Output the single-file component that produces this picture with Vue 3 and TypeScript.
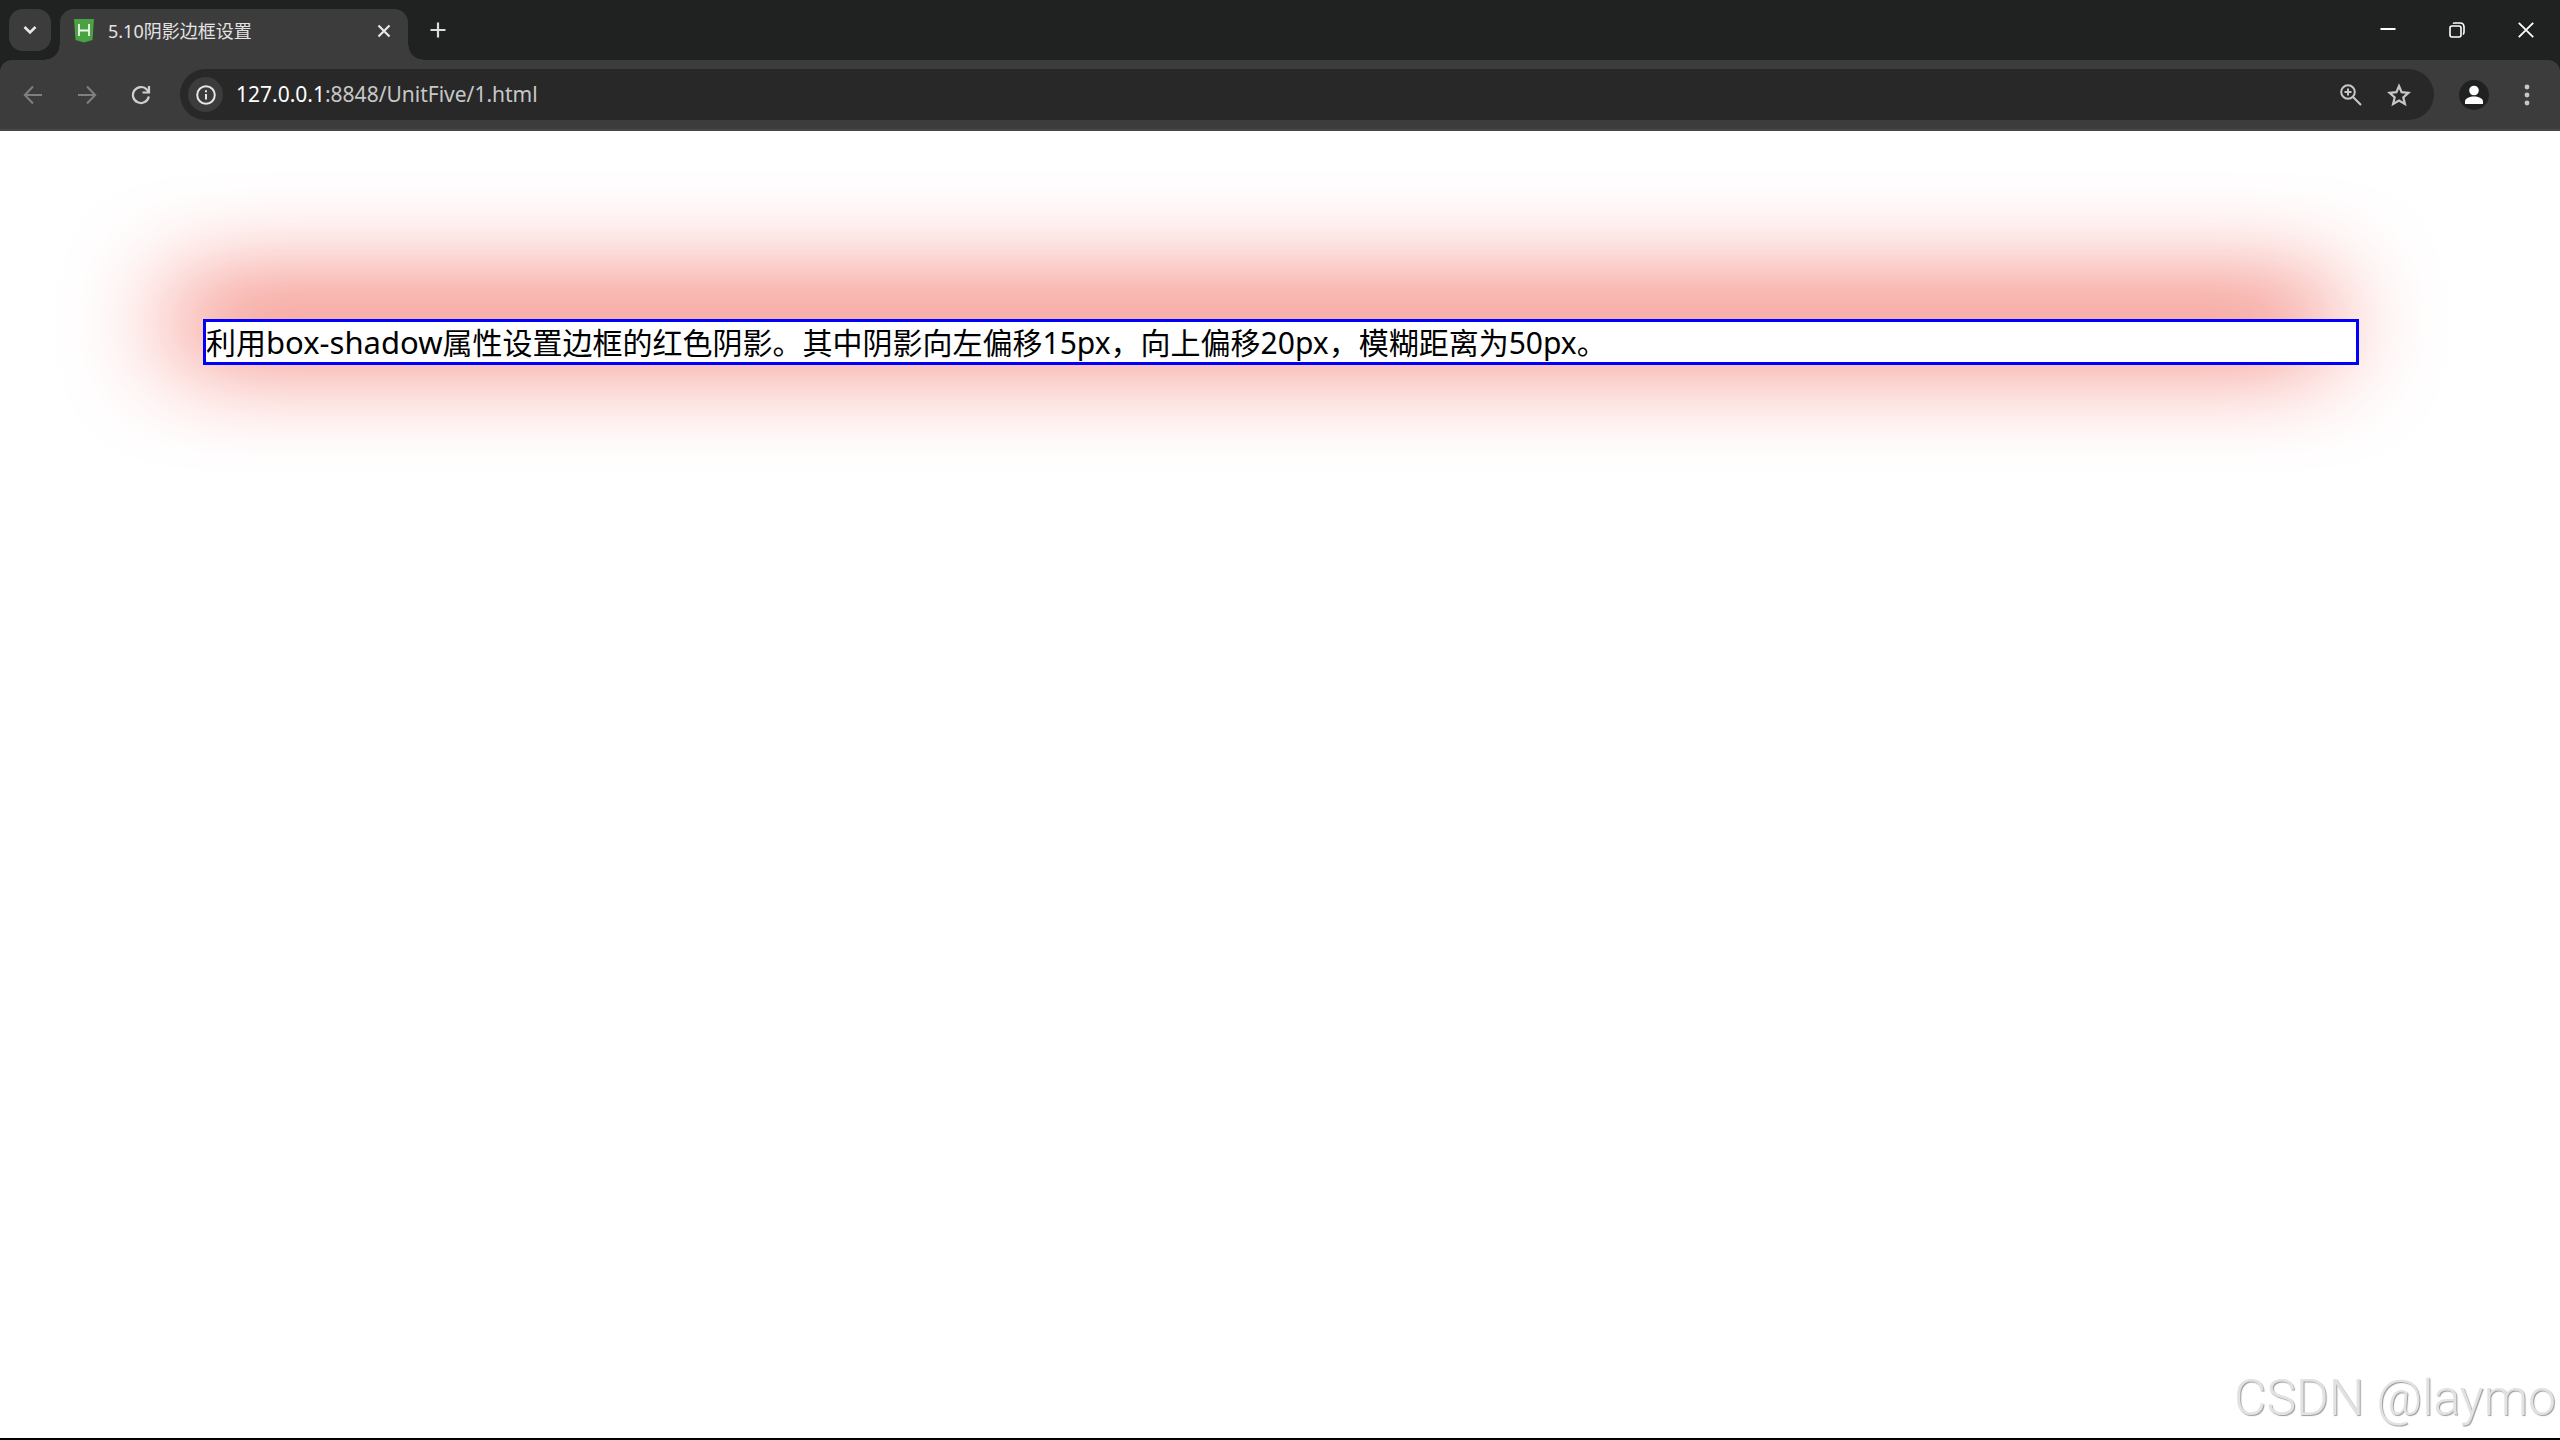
<script setup lang="ts">
import { ref } from 'vue'

const tabTitle = '5.10阴影边框设置'
const host = '127.0.0.1'
const path = ':8848/UnitFive/1.html'
const address = ref(host + path)
</script>

<template>
  <div class="browser">
    <header class="tab-strip">
      <button class="tab-search" type="button" aria-label="Search tabs">
        <svg width="14" height="10" viewBox="0 0 14 10"><path d="M1.5 2 7 7.5 12.500 2" fill="none" stroke="#e8e8e8" stroke-width="2.600" /></svg>
      </button>
      <div class="tab">
        <svg class="favicon" width="20" height="24" viewBox="0 0 20 24">
          <path d="M0 0h20l-1.500 21L10 23.500 1.500 21Z" fill="#4aa342" />
          <path d="M5 5v12M15 5v12M5 11.500h10" fill="none" stroke="#eef7ec" stroke-width="1.800" />
        </svg>
        <span class="tab-title">{{ tabTitle }}</span>
        <button class="tab-close" type="button" aria-label="Close tab">
          <svg width="14" height="14" viewBox="0 0 14 14"><path d="M1.500 1.500l11 11M12.500 1.500l-11 11" stroke="#e8e8e8" stroke-width="2.200" /></svg>
        </button>
      </div>
      <button class="new-tab" type="button" aria-label="New tab">
        <svg width="16" height="16" viewBox="0 0 16 16"><path d="M8 .500v15M.500 8h15" stroke="#dcdcdc" stroke-width="2.200" /></svg>
      </button>
      <div class="window-controls">
        <button type="button" aria-label="Minimize">
          <svg width="16" height="16" viewBox="0 0 16 16"><path d="M.500 7h15" stroke="#fff" stroke-width="2" /></svg>
        </button>
        <button type="button" aria-label="Restore">
          <svg width="16" height="16" viewBox="0 0 16 16" fill="none" stroke="#fff" stroke-width="1.600">
            <rect x="1" y="4" width="11" height="11" rx="2" />
            <path d="M4 1.500Q4.500 1 6 1h5q4 0 4 4v5q0 1.500-1 2.500" />
          </svg>
        </button>
        <button type="button" aria-label="Close window">
          <svg width="16" height="16" viewBox="0 0 16 16"><path d="M.800.800l14.400 14.400M15.200.800.800 15.200" stroke="#fff" stroke-width="1.800" /></svg>
        </button>
      </div>
    </header>

    <nav class="toolbar">
      <button class="nav-button" type="button" aria-label="Back">
        <svg width="20" height="20" viewBox="0 0 20 20" fill="none" stroke="#7f7f7f" stroke-width="2"><path d="M19 10H2M10 1.500 1.800 10 10 18.500" /></svg>
      </button>
      <button class="nav-button" type="button" aria-label="Forward">
        <svg width="20" height="20" viewBox="0 0 20 20" fill="none" stroke="#7f7f7f" stroke-width="2"><path d="M1 10h17M10 1.500l8.200 8.500-8.200 8.500" /></svg>
      </button>
      <button class="nav-button" type="button" aria-label="Reload">
        <svg width="20" height="20" viewBox="0 0 20 20" fill="none" stroke="#cfcfcf" stroke-width="2.200">
          <path d="M17.800 11.500A8 8 0 1 1 16 4.800L17.500 6.500" />
          <path d="M18 1v6.500h-6.500" />
        </svg>
      </button>
      <div class="omnibox">
        <button class="site-info" type="button" aria-label="Site information">
          <svg width="20" height="20" viewBox="0 0 20 20" fill="none" stroke="#e6e6e6" stroke-width="2">
            <circle cx="10" cy="10" r="8.800" />
            <path d="M10 9v5.500M10 5.200v2" />
          </svg>
        </button>
        <label class="address">
          <span class="address-text" aria-hidden="true"><b>{{ host }}</b>{{ path }}</span>
          <input v-model="address" type="text" aria-label="Address" />
        </label>
        <button class="omni-action" type="button" aria-label="Zoom">
          <svg width="22" height="22" viewBox="0 0 22 22" fill="none" stroke="#c7c7c7" stroke-width="2">
            <circle cx="8" cy="8" r="6.800" />
            <path d="M13 13l8 8M8 4.500v7M4.500 8h7" />
          </svg>
        </button>
        <button class="omni-action" type="button" aria-label="Bookmark this page">
          <svg width="24" height="24" viewBox="0 0 24 24" fill="none" stroke="#c7c7c7" stroke-width="2.200">
            <path d="M12 3l2.600 6.200 6.900.600-5.200 4.500 1.600 6.700L12 17.500 6.100 21l1.600-6.700-5.200-4.500 6.900-.600Z" />
          </svg>
        </button>
      </div>
      <button class="profile" type="button" aria-label="Profile">
        <svg width="30" height="30" viewBox="0 0 30 30">
          <circle cx="15" cy="15" r="15" fill="#202221" />
          <circle cx="15" cy="10.500" r="4.800" fill="#fff" />
          <path d="M6 24v-2.500C6 18 11 16.500 15 16.500s9 1.500 9 5V24Z" fill="#fff" />
        </svg>
      </button>
      <button class="menu" type="button" aria-label="Menu">
        <svg width="6" height="22" viewBox="0 0 6 22" fill="#c7c7c7"><circle cx="3" cy="3" r="2.400" /><circle cx="3" cy="11" r="2.400" /><circle cx="3" cy="19" r="2.400" /></svg>
      </button>
    </nav>

    <main class="page">
      <p class="shadow-box">利用<span class="property">box-shadow</span>属性设置边框的红色阴影。其中阴影向左偏移15px，向上偏移20px，模糊距离为50px。</p>
      <span class="watermark">CSDN @laymo</span>
    </main>
  </div>
</template>

<style>
body {
  margin: 0;
}
</style>

<style scoped>
.browser {
  display: flex;
  flex-direction: column;
  min-height: 100vh;
  box-sizing: border-box;
  border-bottom: 2px solid #000;
  background: #202221;
  font-family: "Noto Sans", "Noto Sans CJK SC", sans-serif;
}

button {
  display: flex;
  align-items: center;
  justify-content: center;
  flex: none;
  margin: 0;
  padding: 0;
  border: 0;
  background: none;
}

svg {
  display: block;
}

.tab-strip {
  display: flex;
  align-items: flex-start;
  height: 51px;
  padding: 9px 0 0 9px;
}

.tab-search {
  width: 42px;
  height: 42px;
  border-radius: 14px;
  background: #3c3c3c;
}

.tab {
  position: relative;
  display: flex;
  align-items: center;
  box-sizing: border-box;
  width: 348px;
  height: 51px;
  margin-left: 9px;
  padding: 0 16px 8px 14px;
  border-radius: 14px 14px 0 0;
  background: #3c3c3c;
}

.tab::before,
.tab::after {
  content: "";
  position: absolute;
  bottom: 0;
  width: 15px;
  height: 15px;
}

.tab::before {
  right: 100%;
  background: radial-gradient(circle at 0 0, transparent 14px, #3c3c3c 15px);
}

.tab::after {
  left: 100%;
  background: radial-gradient(circle at 100% 0, transparent 14px, #3c3c3c 15px);
}

.tab-title {
  flex: 1;
  margin-left: 14px;
  color: #e3e3e3;
  font-size: 18px;
  line-height: 24px;
  white-space: nowrap;
}

.tab-close {
  width: 16px;
  height: 24px;
}

.new-tab {
  width: 42px;
  height: 42px;
  margin-left: 9px;
}

.window-controls {
  display: flex;
  margin-left: auto;
}

.window-controls button {
  width: 69px;
  height: 42px;
}

.toolbar {
  display: flex;
  align-items: center;
  height: 69px;
  padding: 0 25px 0 23px;
  border-bottom: 2px solid #474747;
  border-radius: 12px 12px 0 0;
  background: #3c3c3c;
}

.nav-button {
  width: 20px;
  margin-right: 34px;
}

.omnibox {
  display: flex;
  flex: 1;
  align-items: center;
  height: 51px;
  margin-left: -5px;
  padding: 0 8px;
  border-radius: 26px;
  background: #282828;
}

.site-info {
  width: 35px;
  height: 35px;
  border-radius: 50%;
  background: #3c3c3c;
}

.address {
  position: relative;
  flex: 1;
  margin-left: 13px;
  padding-bottom: 2px;
  color: #c7c7c7;
  font-size: 21px;
  line-height: 30px;
}

.address-text b {
  color: #fff;
  font-weight: 400;
}

.address input {
  position: absolute;
  inset: 0;
  width: 100%;
  padding: 0;
  border: 0;
  outline: 0;
  background: none;
  color: transparent;
  font: inherit;
}

.omni-action {
  width: 24px;
  margin-right: 15px;
  margin-left: 9px;
}

.profile {
  margin-left: 25px;
}

.menu {
  width: 16px;
  margin-left: 30px;
}

.page {
  display: flex;
  flex: 1;
  flex-direction: column;
  justify-content: space-between;
  background: #fff;
}

.shadow-box {
  margin: 188px 201px 0 203px;
  padding-top: 1px;
  border: 3px solid #00f;
  background: #fff;
  box-shadow: -29px -20px 106px #e81400;
  color: #000;
  font-size: 30px;
  line-height: 39px;
}

.property {
  font-size: 31px;
  line-height: 30px;
}

.watermark {
  align-self: flex-end;
  margin: 0 4px 12px 0;
  color: #e2e2e2;
  font-family: Roboto, sans-serif;
  font-size: 50px;
  font-weight: 300;
  line-height: 56px;
  text-shadow: 1px 1px 1px #999;
}
</style>
